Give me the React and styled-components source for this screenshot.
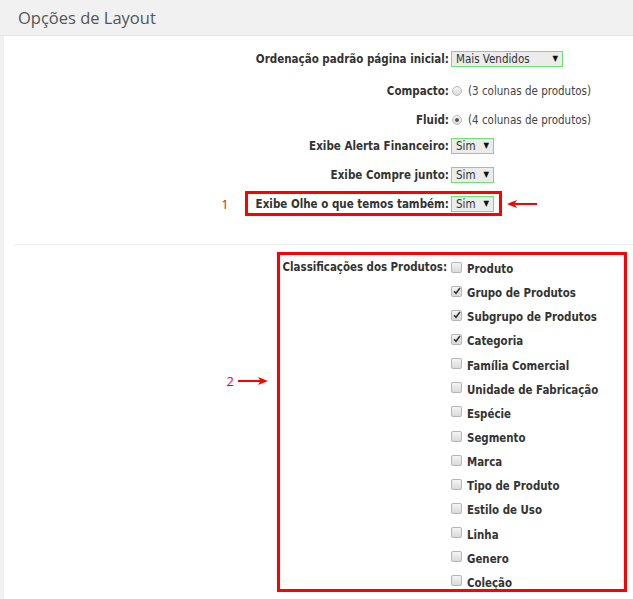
import React from 'react'
import styled, { createGlobalStyle } from 'styled-components'

const GlobalStyle = createGlobalStyle`
    body{
        margin: 0;
        background: #f1f1f1;
        font-family: "DejaVu Sans Condensed", "DejaVu Sans", sans-serif;
    }
`

const Page = styled.div`
    width: 633px;
    height: 599px;
    overflow: hidden;
    background: #f1f1f1;
`

const Header = styled.div`
    height: 35px;
    border-bottom: 1px solid #e4e4e4;
    display: flex;
    align-items: center;
    padding-left: 18px;
    h2{
        margin: 0;
        font-family: "Open Sans", sans-serif;
        font-weight: 400;
        font-size: 16.5px;
        color: #555;
    }
`

const Body = styled.div`
    margin-left: 4px;
    background: #fff;
    height: 563px;
    padding-top: 8px;
    box-sizing: border-box;
`

const Row = styled.div`
    display: flex;
    align-items: center;
    height: 29px;
    margin-top: ${p => p.$mt || 0}px;
`

const LabelCell = styled.div`
    width: 445px;
    display: flex;
    justify-content: flex-end;
    align-items: center;
    font-weight: 700;
    font-size: 11.5px;
    color: #333;
`

const ControlCell = styled.div`
    display: flex;
    align-items: center;
    font-size: 11.5px;
    color: #444;
`

const Select = styled.div`
    margin-left: 2px;
    height: 16px;
    width: ${p => p.$w}px;
    box-sizing: border-box;
    border: 1px solid #6ae66a;
    background: #ececec;
    display: flex;
    align-items: center;
    justify-content: space-between;
    padding: 0 4px 0 4px;
    font-size: 11.5px;
    color: #333;
    span{
        font-size: 8px;
        color: #111;
    }
`

const Radio = styled.span`
    margin-left: 3px;
    margin-right: 6px;
    width: 10px;
    height: 10px;
    border-radius: 50%;
    border: 1px solid #b8b8b8;
    box-sizing: border-box;
    background: linear-gradient(#f6f6f6, #dcdcdc);
    display: flex;
    align-items: center;
    justify-content: center;
    &::after{
        content: '';
        width: 4px;
        height: 4px;
        border-radius: 50%;
        background: ${p => (p.$checked ? '#555' : 'transparent')};
    }
`

const Highlight = styled.div`
    height: 25px;
    box-sizing: border-box;
    border: 3px solid #f00;
    border-${p => (p.$side === 'left' ? 'right' : 'left')}: none;
    display: flex;
    align-items: center;
    padding: ${p => (p.$side === 'left' ? '0 0 0 8px' : '0 5px 0 0')};
    ${Select}{
        margin-left: 2px;
    }
`

const Marker = styled.span`
    font-family: "Open Sans", sans-serif;
    font-size: 13px;
    color: #f00;
    font-weight: 400;
    margin-right: ${p => p.$mr || 0}px;
`

const Divider = styled.hr`
    border: none;
    border-top: 1px solid #eee;
    margin: 26px 0 0 9px;
`

const Section = styled.div`
    display: flex;
    margin-top: 7px;
`

const Side = styled.div`
    width: 273px;
    display: flex;
    justify-content: flex-end;
    align-items: center;
    gap: 4px;
    padding-right: 9px;
    box-sizing: border-box;
    height: 20px;
    margin-top: 119px;
`

const ClassBox = styled.div`
    width: 350px;
    height: 340px;
    box-sizing: border-box;
    border: 3px solid #f00;
    display: flex;
`

const ClassLabel = styled.div`
    width: 169px;
    box-sizing: border-box;
    padding: 5px 2px 0 0;
    text-align: right;
    font-weight: 700;
    font-size: 11.4px;
    color: #333;
`

const List = styled.ul`
    list-style: none;
    margin: 0;
    padding: 2px 0 0 2px;
`

const Item = styled.li`
    height: 24.15px;
    display: flex;
    align-items: center;
    gap: 5px;
    font-weight: 700;
    font-size: 11.4px;
    color: #333;
`

const Check = styled.span`
    width: 11px;
    height: 11px;
    margin-top: -4px;
    box-sizing: border-box;
    border: 1px solid #b5b5b5;
    border-radius: 2px;
    background: linear-gradient(#f4f4f4, #dadada);
    display: flex;
    align-items: center;
    justify-content: center;
`

const CheckMark = () => (
    <svg width="8" height="8" viewBox="0 0 8 8">
        <path d="M1 4.3 L3 6.3 L7 1" fill="none" stroke="#333" strokeWidth="1.6" />
    </svg>
)

const Arrow = ({ dir }) => (
    <svg width="30" height="8" viewBox="0 0 30 8" style={{ transform: dir === 'right' ? 'scaleX(-1)' : 'none' }}>
        <path d="M0 4 L10 0 L8 3 L30 3 L30 5 L8 5 L10 8 Z" fill="#f00" />
    </svg>
)

const produtos = [
    ['Produto', false],
    ['Grupo de Produtos', true],
    ['Subgrupo de Produtos', true],
    ['Categoria', true],
    ['Família Comercial', false],
    ['Unidade de Fabricação', false],
    ['Espécie', false],
    ['Segmento', false],
    ['Marca', false],
    ['Tipo de Produto', false],
    ['Estilo de Uso', false],
    ['Linha', false],
    ['Genero', false],
    ['Coleção', false],
]

export default function App() {
    return (
        <Page>
            <GlobalStyle />
            <Header><h2>Opções de Layout</h2></Header>
            <Body>
                <Row>
                    <LabelCell>Ordenação padrão página inicial:</LabelCell>
                    <ControlCell>
                        <Select $w={112}>Mais Vendidos <span>▼</span></Select>
                    </ControlCell>
                </Row>
                <Row $mt={3}>
                    <LabelCell>Compacto:</LabelCell>
                    <ControlCell><Radio />(3 colunas de produtos)</ControlCell>
                </Row>
                <Row>
                    <LabelCell>Fluid:</LabelCell>
                    <ControlCell><Radio $checked />(4 colunas de produtos)</ControlCell>
                </Row>
                <Row $mt={-3}>
                    <LabelCell>Exibe Alerta Financeiro:</LabelCell>
                    <ControlCell><Select $w={43}>Sim <span>▼</span></Select></ControlCell>
                </Row>
                <Row>
                    <LabelCell>Exibe Compre junto:</LabelCell>
                    <ControlCell><Select $w={43}>Sim <span>▼</span></Select></ControlCell>
                </Row>
                <Row>
                    <LabelCell>
                        <Marker $mr={16}>1</Marker>
                        <Highlight $side="left">Exibe Olhe o que temos também:</Highlight>
                    </LabelCell>
                    <ControlCell>
                        <Highlight $side="right"><Select $w={43}>Sim <span>▼</span></Select></Highlight>
                        <span style={{ marginLeft: 5, display: 'flex' }}><Arrow dir="left" /></span>
                    </ControlCell>
                </Row>
                <Divider />
                <Section>
                    <Side>
                        <Marker>2</Marker>
                        <Arrow dir="right" />
                    </Side>
                    <ClassBox>
                        <ClassLabel>Classificações dos Produtos:</ClassLabel>
                        <List>
                            {produtos.map(([name, checked]) => (
                                <Item key={name}>
                                    <Check>{checked && <CheckMark />}</Check>
                                    {name}
                                </Item>
                            ))}
                        </List>
                    </ClassBox>
                </Section>
            </Body>
        </Page>
    )
}
